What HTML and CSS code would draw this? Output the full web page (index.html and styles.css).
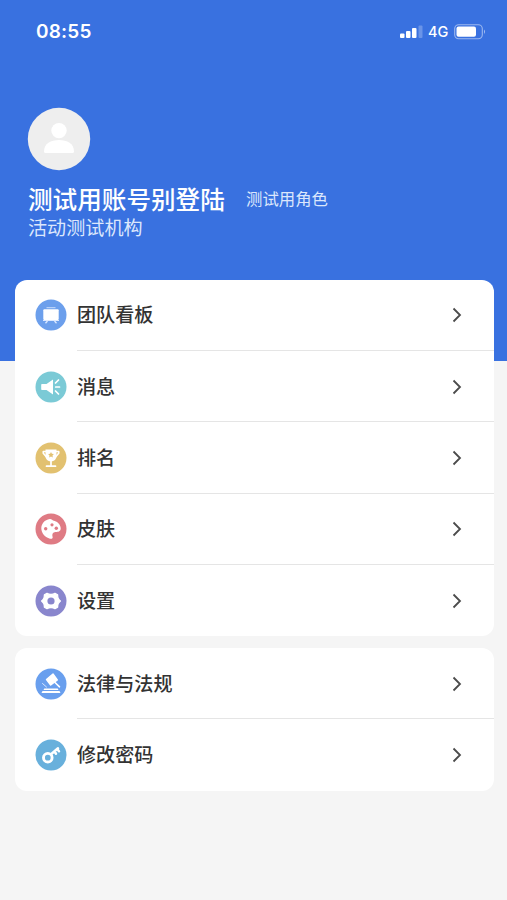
FILE: index.html
```html
<!DOCTYPE html>
<html lang="zh-CN">
<head>
<meta charset="utf-8">
<meta name="viewport" content="width=device-width, initial-scale=1">
<title>我的</title>
<link rel="stylesheet" href="styles.css">
</head>
<body>
<header class="hero">
  <div class="status">
    <span class="time">08:55</span>
    <div class="signals">
      <svg width="23" height="14" viewBox="0 0 23 14" fill="#fff"><rect x="0" y="8.500" width="4.500" height="4.500" rx="1"/><rect x="6" y="6" width="4.500" height="7" rx="1"/><rect x="12" y="3" width="4.500" height="10" rx="1"/><rect x="18.500" y="0.500" width="4" height="12.500" rx="1" opacity=".25"/></svg>
      <span class="network">4G</span>
      <svg width="33" height="16" viewBox="0 0 33 16"><rect x=".7" y=".7" width="27.600" height="14" rx="4" fill="none" stroke="#fff" stroke-opacity=".5" stroke-width="1.100"/><rect x="2.500" y="2.600" width="19.500" height="10.200" rx="2" fill="#fff"/><path d="M30 5.500q2 2.200 0 4.400z" fill="#fff" opacity=".55"/></svg>
    </div>
  </div>
  <div class="avatar">
    <svg width="64" height="64" viewBox="0 0 64 64"><circle cx="32" cy="32" r="31.200" fill="#eee"/><circle cx="32" cy="23.600" r="7.700" fill="#fff"/><path d="M17 44.500c0-8 7-11.500 15-11.500s15 3.500 15 11.500q0 1.500-1.500 1.500h-27q-1.500 0-1.500-1.500z" fill="#fff"/></svg>
  </div>
  <div class="identity">
    <h1 class="name">测试用账号别登陆</h1>
    <span class="role">测试用角色</span>
  </div>
  <p class="org">活动测试机构</p>
</header>
<main class="menus">
  <nav class="card">
    <a class="row">
      <svg class="icon" viewBox="0 0 32 32"><circle cx="16" cy="16" r="15.500" fill="#6c9fec"/><path d="M11.500 8.700h9" stroke="#b8d1f8" stroke-width="1.200"/><rect x="8.300" y="10.300" width="15.400" height="10.700" rx="1" fill="#fff"/><path d="M8 21.500h16" stroke="#dce9ff"/><path d="m12.500 22-2 2.300M19.500 22l2 2.300" stroke="#dce9ff" stroke-width="1.300"/></svg>
      <span class="body"><span class="label">团队看板</span><svg class="chevron" viewBox="0 0 10 16"><path d="M1.500 1.500 8 8l-6.500 6.500"/></svg></span>
    </a>
    <a class="row">
      <svg class="icon" viewBox="0 0 32 32"><circle cx="16" cy="16" r="15.500" fill="#7bcad6"/><path d="M7 13h4.500L18 8.500v15L11.500 19H7q-.8 0-.8-.8v-4.400q0-.8.8-.8z" fill="#fff"/><path d="m20.500 12 3-3M20.700 16h3.800M20.500 20l3 3" stroke="#fff" stroke-width="1.700" stroke-linecap="round"/></svg>
      <span class="body"><span class="label">消息</span><svg class="chevron" viewBox="0 0 10 16"><path d="M1.500 1.500 8 8l-6.500 6.500"/></svg></span>
    </a>
    <a class="row">
      <svg class="icon" viewBox="0 0 32 32"><circle cx="16" cy="16" r="15.500" fill="#e2c170"/><path d="M10.500 7.500h11V14c0 3.300-2.300 5.300-5.500 5.300s-5.500-2-5.500-5.300z" fill="#fff"/><path d="M11.500 9.500H8.300v1.800l3.200 3.700M20.500 9.500h3.200v1.800L20.500 15M16 18v5.500M11.500 24.200h9" fill="none" stroke="#fff" stroke-width="1.700" stroke-linecap="round" stroke-linejoin="round"/><path d="m16 10 .9 1.800 2 .3-1.400 1.400.3 2-1.800-.9-1.800.9.3-2-1.400-1.400 2-.3z" fill="#e2c170"/></svg>
      <span class="body"><span class="label">排名</span><svg class="chevron" viewBox="0 0 10 16"><path d="M1.500 1.500 8 8l-6.500 6.500"/></svg></span>
    </a>
    <a class="row">
      <svg class="icon" viewBox="0 0 32 32"><circle cx="16" cy="16" r="15.500" fill="#df7b84"/><path d="M14.800 6C9.500 6.700 6.300 11 6.300 15.300c0 5 4 9.400 8.700 10.400 2 .4 3-.4 2.600-1.700-.8-2.700.1-4.700 2.800-4.900 3-.3 5.400-.7 5.300-3.900-.1-3.400-3.200-6.500-6.700-7.400-1.300-.3-2.700-2-4.200-1.800z" fill="#fff"/><g fill="#df7b84"><circle cx="10.700" cy="15.800" r="1.700"/><circle cx="17" cy="11.800" r="1.600"/><circle cx="21.300" cy="15.300" r="1.700"/></g></svg>
      <span class="body"><span class="label">皮肤</span><svg class="chevron" viewBox="0 0 10 16"><path d="M1.500 1.500 8 8l-6.500 6.500"/></svg></span>
    </a>
    <a class="row">
      <svg class="icon" viewBox="0 0 32 32"><circle cx="16" cy="16" r="15.500" fill="#8986cd"/><path d="M12 8.300q1.700 1.200 4 1.200t4-1.200l2.600 1.400q0 2.500.7 3.800t2.100 2.500q-1.400 1.200-2.100 2.500t-.7 3.800L20 23.700q-1.700-1.200-4-1.200t-4 1.200l-2.600-1.400q0-2.500-.7-3.800T6.600 16q1.400-1.200 2.100-2.500t.7-3.800z" fill="#fff" stroke="#fff" stroke-width="1.300" stroke-linejoin="round"/><circle cx="16" cy="16" r="3.600" fill="#8986cd"/></svg>
      <span class="body"><span class="label">设置</span><svg class="chevron" viewBox="0 0 10 16"><path d="M1.500 1.500 8 8l-6.500 6.500"/></svg></span>
    </a>
  </nav>
  <nav class="card">
    <a class="row">
      <svg class="icon" viewBox="0 0 32 32"><circle cx="16" cy="16" r="15.500" fill="#699fee"/><path d="m11.500 11.500 6.500-5.500 4.300 6-6.600 5z" fill="#fff" stroke="#fff" stroke-width="1.400" stroke-linejoin="round"/><path d="m19.500 14 5 4.800" stroke="#fff" stroke-width="1.600" stroke-linecap="round"/><path d="m7.500 15.500 4 3.500" stroke="#d5e5ff" stroke-linecap="round"/><path d="M9.300 20.500h13.400l.8 1.500h-15zM7.500 23h17l1 2h-19z" fill="#fff"/></svg>
      <span class="body"><span class="label">法律与法规</span><svg class="chevron" viewBox="0 0 10 16"><path d="M1.500 1.500 8 8l-6.500 6.500"/></svg></span>
    </a>
    <a class="row">
      <svg class="icon" viewBox="0 0 32 32"><circle cx="16" cy="16" r="15.500" fill="#68b0dc"/><circle cx="12.800" cy="18.700" r="4.300" fill="none" stroke="#fff" stroke-width="2.900"/><path d="m16 15.300 7-6M19.500 12.500l1.500 2.300M22.300 10.300l1.700 2" fill="none" stroke="#fff" stroke-width="2.500" stroke-linecap="round"/></svg>
      <span class="body"><span class="label">修改密码</span><svg class="chevron" viewBox="0 0 10 16"><path d="M1.500 1.500 8 8l-6.500 6.500"/></svg></span>
    </a>
  </nav>
</main>
</body>
</html>
```
FILE: styles.css
```css
* { box-sizing: border-box; }

body {
  margin: 0;
  min-height: 900px;
  background: #f5f5f5;
  color: #333;
  font-family: "Noto Sans CJK SC", sans-serif;
}

svg { display: block; flex: none; }

.hero {
  height: 361px;
  padding: 20px 20px 0 28px;
  background: #3971e0;
  color: #fff;
}

.status {
  display: flex;
  align-items: center;
  justify-content: space-between;
  height: 23px;
  padding-left: 8px;
}

.time {
  font: 600 19px/23px Inter, sans-serif;
  letter-spacing: 0.2px;
}

.signals { display: flex; align-items: center; }

.network {
  width: 21px;
  margin: 0 5px 0 5px;
  font: 500 14.500px/20px Inter, sans-serif;
}

.avatar { margin: 64px 0 0 -1px; }

.identity {
  display: flex;
  align-items: center;
  height: 28px;
  margin-top: 13px;
}

.name {
  width: 218px;
  margin: 0;
  font-size: 24.600px;
  font-weight: 500;
  line-height: 28px;
  white-space: nowrap;
}

.role {
  color: #dce7fc;
  font-size: 16.400px;
  line-height: 28px;
}

.org {
  margin: 2px 0 0;
  color: #dce7fc;
  font-size: 19.100px;
  line-height: 26px;
}

.menus {
  display: grid;
  gap: 11.500px;
  margin: -81.500px 13.500px 0 14.500px;
}

.card {
  overflow: hidden;
  border-radius: 12px;
  background: #fff;
}

.row {
  display: flex;
  align-items: center;
  gap: 10.500px;
  height: 71.400px;
  padding-left: 20px;
}

.icon { width: 32px; height: 32px; }

.body {
  display: flex;
  flex: 1;
  align-items: center;
  justify-content: space-between;
  height: 100%;
  padding-right: 32px;
  border-bottom: 1px solid #e5e5e5;
}

.row:last-child .body { border-bottom-color: transparent; }

.label {
  padding-bottom: 1px;
  font-size: 19.100px;
  font-weight: 500;
  line-height: 28px;
}

.chevron {
  width: 10px;
  height: 16px;
  margin-top: 1px;
  fill: none;
  stroke: #4b4b4b;
  stroke-width: 1.800;
}
```
